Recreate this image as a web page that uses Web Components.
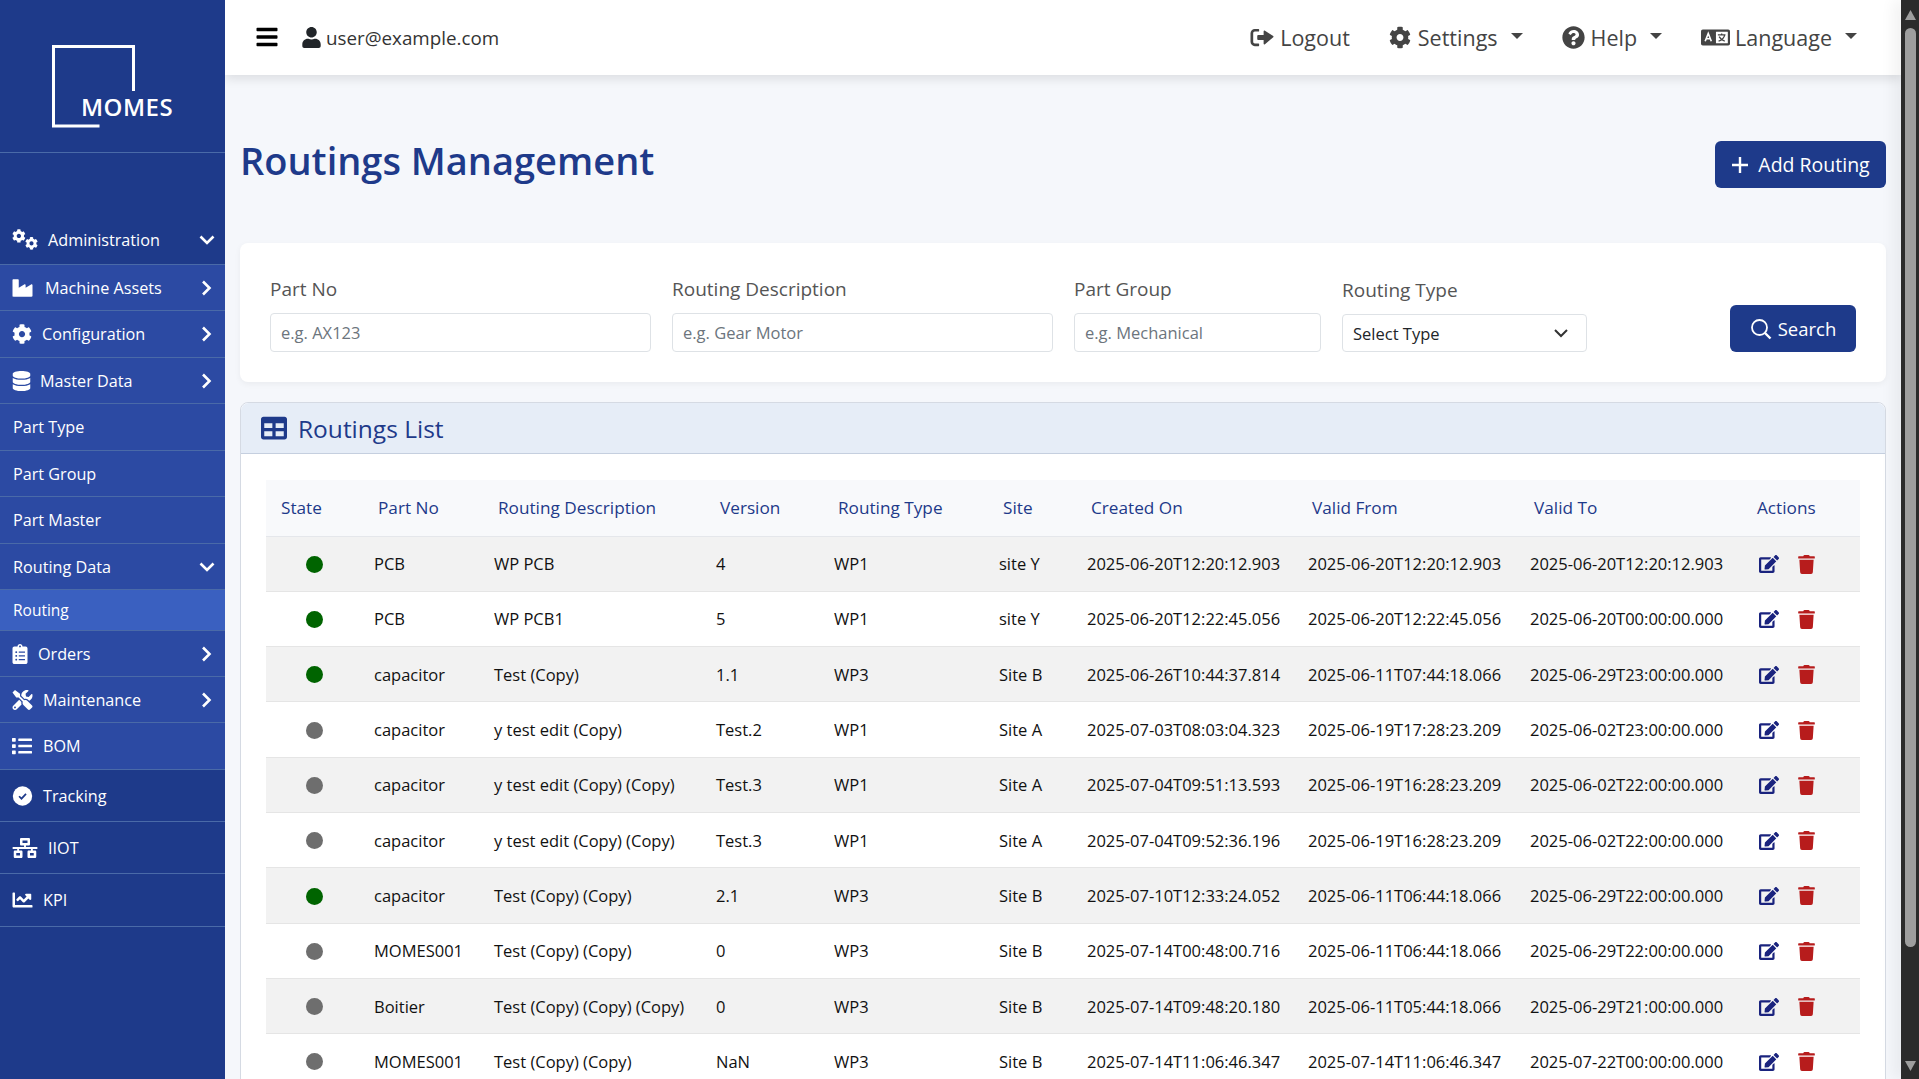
<!DOCTYPE html>
<html lang="en">
<head>
<meta charset="utf-8">
<title>Routings Management</title>
<style>
  html, body { margin: 0; height: 100%; overflow: hidden; }
  body { font-family: "Open Sans", "Liberation Sans", sans-serif; background: #f5f7fb; }
</style>
</head>
<body>
<momes-app>
  <side-bar slot="side">
    <nav-item h="46" pb="4" tone="dark" icon="cogs" iw="26" text="48" chevron="down">Administration</nav-item>
    <nav-item h="46" icon="industry" iw="21" text="45" chevron="right">Machine Assets</nav-item>
    <nav-item h="47" icon="cog" iw="20" text="42" chevron="right">Configuration</nav-item>
    <nav-item h="46" icon="database" iw="19" text="40" chevron="right">Master Data</nav-item>
    <nav-item h="47" text="13">Part Type</nav-item>
    <nav-item h="46" text="13">Part Group</nav-item>
    <nav-item h="47" text="13">Part Master</nav-item>
    <nav-item h="46" text="13" chevron="down">Routing Data</nav-item>
    <nav-item h="41" tone="active" text="13">Routing</nav-item>
    <nav-item h="46" icon="clipboard" iw="16" text="38" chevron="right">Orders</nav-item>
    <nav-item h="46" icon="tools" iw="21" text="43" chevron="right">Maintenance</nav-item>
    <nav-item h="47" icon="list" iw="20" text="43">BOM</nav-item>
    <nav-item h="52" tone="dark" icon="check" iw="21" text="43">Tracking</nav-item>
    <nav-item h="52" tone="dark" icon="network" iw="26" text="48">IIOT</nav-item>
    <nav-item h="53" tone="dark" icon="chart" iw="21" text="43">KPI</nav-item>
  </side-bar>
  <top-bar slot="top"></top-bar>
  <page-head slot="main"></page-head>
  <filter-card slot="main"></filter-card>
  <routing-list slot="main"></routing-list>
  <fake-scrollbar slot="bar"></fake-scrollbar>
</momes-app>

<script>
const ICONS = {
  bars: [448, 'M16 132h416c8.837 0 16-7.163 16-16V76c0-8.837-7.163-16-16-16H16C7.163 60 0 67.163 0 76v40c0 8.837 7.163 16 16 16zm0 160h416c8.837 0 16-7.163 16-16v-40c0-8.837-7.163-16-16-16H16c-8.837 0-16 7.163-16 16v40c0 8.837 7.163 16 16 16zm0 160h416c8.837 0 16-7.163 16-16v-40c0-8.837-7.163-16-16-16H16c-8.837 0-16 7.163-16 16v40c0 8.837 7.163 16 16 16z'],
  user: [448, 'M224 256c70.7 0 128-57.3 128-128S294.7 0 224 0 96 57.3 96 128s57.3 128 128 128zm89.6 32h-16.7c-22.2 10.2-46.9 16-72.9 16s-50.6-5.8-72.9-16h-16.7C60.2 288 0 348.2 0 422.4V464c0 26.5 21.5 48 48 48h352c26.5 0 48-21.5 48-48v-41.6c0-74.2-60.2-134.4-134.4-134.4z'],
  cog: [512, 'M487.4 315.7l-42.6-24.6c4.3-23.2 4.3-47 0-70.2l42.6-24.6c4.9-2.8 7.1-8.6 5.5-14-11.1-35.6-30-67.8-54.7-94.6-3.8-4.1-10-5.1-14.8-2.3L380.8 110c-17.9-15.4-38.5-27.3-60.8-35.1V25.8c0-5.6-3.9-10.5-9.4-11.7-36.7-8.2-74.3-7.8-109.2 0-5.5 1.2-9.4 6.1-9.4 11.7V75c-22.2 7.9-42.8 19.8-60.8 35.1L88.7 85.5c-4.9-2.8-11-1.9-14.8 2.3-24.7 26.7-43.6 58.9-54.7 94.6-1.7 5.4.6 11.2 5.5 14L67.3 221c-4.3 23.2-4.3 47 0 70.2l-42.6 24.6c-4.9 2.8-7.1 8.6-5.5 14 11.1 35.6 30 67.8 54.7 94.6 3.8 4.1 10 5.1 14.8 2.3l42.6-24.6c17.9 15.4 38.5 27.3 60.8 35.1v49.2c0 5.6 3.9 10.5 9.4 11.7 36.7 8.2 74.3 7.8 109.2 0 5.5-1.2 9.4-6.1 9.4-11.7v-49.2c22.2-7.9 42.8-19.8 60.8-35.1l42.6 24.6c4.9 2.8 11 1.9 14.8-2.3 24.7-26.7 43.6-58.9 54.7-94.6 1.5-5.5-.7-11.3-5.6-14.1zM256 336c-44.1 0-80-35.9-80-80s35.9-80 80-80 80 35.9 80 80-35.9 80-80 80z'],
  help: [512, 'M504 256c0 136.997-111.043 248-248 248S8 392.997 8 256C8 119.083 119.043 8 256 8s248 111.083 248 248zM262.655 90c-54.497 0-89.255 22.957-116.549 63.758-3.536 5.286-2.353 12.415 2.715 16.258l34.699 26.31c5.205 3.947 12.621 3.008 16.665-2.122 17.864-22.658 30.113-35.797 57.303-35.797 20.429 0 45.698 13.148 45.698 32.958 0 14.976-12.363 22.667-32.534 33.976C247.128 238.528 216 254.941 216 296v4c0 6.627 5.373 12 12 12h56c6.627 0 12-5.373 12-12v-1.333c0-28.462 83.186-29.647 83.186-106.667 0-58.002-60.165-102-116.531-102zM256 338c-25.365 0-46 20.635-46 46 0 25.364 20.635 46 46 46s46-20.636 46-46c0-25.365-20.635-46-46-46z'],
  table: [512, 'M464 32H48C21.49 32 0 53.49 0 80v352c0 26.51 21.49 48 48 48h416c26.51 0 48-21.49 48-48V80c0-26.51-21.49-48-48-48zM224 416H64v-96h160v96zm0-160H64v-96h160v96zm224 160H288v-96h160v96zm0-160H288v-96h160v96z'],
  edit: [576, 'M402.6 83.2l90.2 90.2c3.8 3.8 3.8 10 0 13.8L274.4 405.6l-92.8 10.3c-12.4 1.4-22.9-9.1-21.5-21.5l10.3-92.8L388.8 83.2c3.8-3.8 10-3.8 13.8 0zm162-22.9l-48.8-48.8c-15.2-15.2-39.9-15.2-55.2 0l-35.4 35.4c-3.8 3.8-3.8 10 0 13.8l90.2 90.2c3.8 3.8 10 3.8 13.8 0l35.4-35.4c15.2-15.3 15.2-40 0-55.2zM384 346.2V448H64V128h229.8c3.2 0 6.2-1.3 8.5-3.5l40-40c7.6-7.6 2.2-20.5-8.5-20.5H48C21.5 64 0 85.5 0 112v352c0 26.5 21.5 48 48 48h352c26.5 0 48-21.5 48-48V306.2c0-10.7-12.9-16-20.5-8.5l-40 40c-2.2 2.3-3.5 5.3-3.5 8.5z'],
  trash: [448, 'M432 32H312l-9.4-18.7A24 24 0 0 0 281.1 0H166.8a23.72 23.72 0 0 0-21.4 13.3L136 32H16A16 16 0 0 0 0 48v32a16 16 0 0 0 16 16h416a16 16 0 0 0 16-16V48a16 16 0 0 0-16-16zM53.2 467a48 48 0 0 0 47.9 45h245.8a48 48 0 0 0 47.9-45L416 128H32z'],
  industry: [512, 'M475.115 163.781L336 252.309v-68.28c0-18.916-20.931-30.399-36.885-20.248L160 252.309V56c0-13.255-10.745-24-24-24H24C10.745 32 0 42.745 0 56v400c0 13.255 10.745 24 24 24h464c13.255 0 24-10.745 24-24V184.029c0-18.917-20.931-30.399-36.885-20.248z'],
  database: [448, 'M448 73.143v45.714C448 159.143 347.667 192 224 192S0 159.143 0 118.857V73.143C0 32.857 100.333 0 224 0s224 32.857 224 73.143zM448 176v102.857C448 319.143 347.667 352 224 352S0 319.143 0 278.857V176c48.125 33.143 136.208 48.572 224 48.572S399.874 209.143 448 176zm0 160v102.857C448 479.143 347.667 512 224 512S0 479.143 0 438.857V336c48.125 33.143 136.208 48.572 224 48.572S399.874 369.143 448 336z'],
  clipboard: [384, 'M336 64h-80c0-35.3-28.7-64-64-64s-64 28.7-64 64H48C21.5 64 0 85.5 0 112v352c0 26.5 21.5 48 48 48h288c26.5 0 48-21.5 48-48V112c0-26.5-21.5-48-48-48zM96 424c-13.3 0-24-10.7-24-24s10.7-24 24-24 24 10.7 24 24-10.7 24-24 24zm0-96c-13.3 0-24-10.7-24-24s10.7-24 24-24 24 10.7 24 24-10.7 24-24 24zm0-96c-13.3 0-24-10.7-24-24s10.7-24 24-24 24 10.7 24 24-10.7 24-24 24zm96-192c13.3 0 24 10.7 24 24s-10.7 24-24 24-24-10.7-24-24 10.7-24 24-24zm128 368c0 4.4-3.6 8-8 8H168c-4.4 0-8-3.6-8-8v-16c0-4.4 3.6-8 8-8h144c4.4 0 8 3.6 8 8v16zm0-96c0 4.4-3.6 8-8 8H168c-4.4 0-8-3.6-8-8v-16c0-4.4 3.6-8 8-8h144c4.4 0 8 3.6 8 8v16zm0-96c0 4.4-3.6 8-8 8H168c-4.4 0-8-3.6-8-8v-16c0-4.4 3.6-8 8-8h144c4.4 0 8 3.6 8 8v16z'],
  tools: [512, 'M501.1 395.7L384 278.6c-23.1-23.1-57.6-27.6-85.4-13.9L192 158.1V96L64 0 0 64l96 128h62.1l106.6 106.6c-13.6 27.8-9.2 62.3 13.9 85.4l117.1 117.1c14.6 14.6 38.2 14.6 52.7 0l52.7-52.7c14.5-14.6 14.5-38.2 0-52.7zM331.7 225c28.3 0 54.9 11 74.9 31l19.4 19.4c15.8-6.9 30.8-16.5 43.8-29.5 37.1-37.1 49.7-89.3 37.9-136.7-2.2-9-13.5-12.1-20.1-5.5l-74.4 74.4-67.9-11.3L334 98.9l74.4-74.4c6.6-6.6 3.4-17.9-5.7-20.2-47.4-11.7-99.6.9-136.6 37.9-28.5 28.5-41.9 66.1-41.2 103.6l82.1 82.1c8.1-1.9 16.5-2.9 24.7-2.9zm-103.9 82l-56.7-56.7L18.7 402.8c-25 25-25 65.5 0 90.5s65.5 25 90.5 0l123.6-123.6c-7.6-19.9-9.9-41.6-5-62.7zM64 472c-13.2 0-24-10.8-24-24 0-13.3 10.7-24 24-24s24 10.7 24 24c0 13.2-10.7 24-24 24z'],
  list: [512, 'M80 368H16a16 16 0 0 0-16 16v64a16 16 0 0 0 16 16h64a16 16 0 0 0 16-16v-64a16 16 0 0 0-16-16zm0-320H16A16 16 0 0 0 0 64v64a16 16 0 0 0 16 16h64a16 16 0 0 0 16-16V64a16 16 0 0 0-16-16zm0 160H16a16 16 0 0 0-16 16v64a16 16 0 0 0 16 16h64a16 16 0 0 0 16-16v-64a16 16 0 0 0-16-16zm416 176H176a16 16 0 0 0-16 16v32a16 16 0 0 0 16 16h320a16 16 0 0 0 16-16v-32a16 16 0 0 0-16-16zm0-320H176a16 16 0 0 0-16 16v32a16 16 0 0 0 16 16h320a16 16 0 0 0 16-16V80a16 16 0 0 0-16-16zm0 160H176a16 16 0 0 0-16 16v32a16 16 0 0 0 16 16h320a16 16 0 0 0 16-16v-32a16 16 0 0 0-16-16z'],
  network: [640, 'M640 264v-16c0-8.84-7.16-16-16-16H344v-40h72c17.67 0 32-14.33 32-32V32c0-17.67-14.33-32-32-32H224c-17.67 0-32 14.33-32 32v128c0 17.67 14.33 32 32 32h72v40H16c-8.84 0-16 7.16-16 16v16c0 8.84 7.16 16 16 16h104v40H64c-17.67 0-32 14.33-32 32v128c0 17.67 14.33 32 32 32h160c17.67 0 32-14.33 32-32V352c0-17.67-14.33-32-32-32h-56v-40h304v40h-56c-17.67 0-32 14.33-32 32v128c0 17.67 14.33 32 32 32h160c17.67 0 32-14.33 32-32V352c0-17.67-14.33-32-32-32h-56v-40h104c8.84 0 16-7.16 16-16zM256 128V64h128v64H256zm-64 320H96v-64h96v64zm352 0h-96v-64h96v64z'],
  chart: [512, 'M496 384H64V80c0-8.84-7.16-16-16-16H16C7.16 64 0 71.16 0 80v336c0 17.67 14.33 32 32 32h464c8.84 0 16-7.16 16-16v-32c0-8.84-7.16-16-16-16zM464 96H345.94c-21.38 0-32.09 25.85-16.97 40.97l32.4 32.4L288 242.75l-73.37-73.37c-12.5-12.5-32.76-12.5-45.25 0l-68.69 68.69c-6.25 6.25-6.25 16.38 0 22.63l22.62 22.62c6.25 6.25 16.38 6.25 22.63 0L192 237.25l73.37 73.37c12.5 12.5 32.76 12.5 45.25 0l96-96 32.4 32.4c15.12 15.12 40.97 4.41 40.97-16.97V112c.01-8.84-7.15-16-15.99-16z'],
};

// icons that need more than one plain path, or a tighter crop
const CUSTOM_ICONS = {
  cogs: `<svg viewBox="0 0 640 512" fill="currentColor"><path transform="scale(.66)" d="${ICONS.cog[1]}"/><path transform="translate(320 192) scale(.625)" d="${ICONS.cog[1]}"/></svg>`,
  check: `<svg viewBox="0 0 512 512"><circle cx="256" cy="256" r="248" fill="currentColor"/><path d="M168 262l62 62 116-122" fill="none" stroke="#1e3a8a" stroke-width="44"/></svg>`,
  logout: `<svg viewBox="0 0 512 512" fill="currentColor"><path d="M180 448H96c-53 0-96-43-96-96V160c0-53 43-96 96-96h84c6.6 0 12 5.4 12 12v36c0 6.6-5.4 12-12 12H96c-19.9 0-36 16.1-36 36v192c0 19.900 16.100 36 36 36h84c6.600 0 12 5.400 12 12v36c0 6.600-5.400 12-12 12z"/><path d="M292 116v84H170c-11 0-20 9-20 20v72c0 11 9 20 20 20h122v84c0 16 19 24 30 13l184-159c8-7 8-19 0-26L322 103c-11-11-30-3-30 13z"/></svg>`,
  language: `<svg viewBox="0 70 640 372"><path fill="currentColor" d="M40 80h560a40 40 0 0 1 40 40v272a40 40 0 0 1-40 40H40a40 40 0 0 1-40-40V120a40 40 0 0 1 40-40z"/><rect x="330" y="128" width="262" height="256" rx="6" fill="#fff"/><path d="M92 340l68-172 68 172M118 284h84" fill="none" stroke="#fff" stroke-width="36"/><path d="M372 196h168M456 170v30M524 196c-16 70-72 118-136 140M400 236c26 50 70 84 124 100" fill="none" stroke="currentColor" stroke-width="28"/></svg>`,
};

class FaIcon extends HTMLElement {
  connectedCallback() {
    const name = this.getAttribute('name');
    const w = this.getAttribute('w') || 16;
    const h = this.getAttribute('h') || w;
    let svg = CUSTOM_ICONS[name];
    if (!svg) {
      const [vw, d] = ICONS[name];
      svg = `<svg viewBox="0 0 ${vw} 512" fill="currentColor"><path d="${d}"/></svg>`;
    }
    this.attachShadow({mode: 'open'}).innerHTML = `
      <style>
        :host { display: inline-flex; flex: none; width: ${w}px; height: ${h}px; }
        svg { width: 100%; height: 100%; display: block; }
      </style>${svg}`;
  }
}

class MomesApp extends HTMLElement {
  constructor() {
    super();
    this.attachShadow({mode: 'open'}).innerHTML = `
      <style>
        :host { display: flex; height: 100vh; overflow: hidden; background: #f5f7fb; }
        .center { flex: 1; min-width: 0; display: flex; flex-direction: column; overflow: hidden; }
        .content { padding: 66px 15px 0 15px; flex: 1; min-height: 0; }
      </style>
      <slot name="side"></slot>
      <div class="center">
        <slot name="top"></slot>
        <div class="content"><slot name="main"></slot></div>
      </div>
      <slot name="bar"></slot>`;
  }
}

class SideBar extends HTMLElement {
  constructor() {
    super();
    this.attachShadow({mode: 'open'}).innerHTML = `
      <style>
        :host { display: block; flex: none; width: 225px; background: #1e3a8a; position: relative; z-index: 2; }
        .logo { height: 152px; border-bottom: 1px solid #4a6aa8; display: flex; }
        .mark { position: relative; width: 225px; height: 152px; }
        svg { position: absolute; left: 0; top: 0; }
        .name { position: absolute; left: 81px; top: 90px; color: #fff; font: 600 24px/34px "Open Sans", sans-serif; letter-spacing: .5px; }
        nav { padding-top: 66px; }
      </style>
      <div class="logo">
        <div class="mark">
          <svg width="225" height="152" fill="none" stroke="#fff" stroke-width="3"><path d="M133.500 91V46.500H53.500V126H99.500"/></svg>
          <span class="name">MOMES</span>
        </div>
      </div>
      <nav><slot></slot></nav>`;
  }
}

class NavItem extends HTMLElement {
  connectedCallback() {
    const tone = this.getAttribute('tone');
    const bg = tone === 'dark' ? '#1e3a8a' : tone === 'active' ? '#3a60c0' : '#2c4aa3';
    const icon = this.getAttribute('icon');
    const iw = this.getAttribute('iw') || 20;
    const ih = icon === 'cogs' ? 21 : 20;
    const chev = this.getAttribute('chevron');
    const chevron = chev === 'down' ?
        '<svg class="chev" viewBox="0 0 16 12" width="16" height="12"><path d="M1.500 2.500L8 9l6.500-6.500" fill="none" stroke="#fff" stroke-width="2.600"/></svg>' :
        chev === 'right' ?
        '<svg class="chev" viewBox="0 0 16 16" width="16" height="16"><path d="M4 1.500L10.500 8 4 14.500" fill="none" stroke="#fff" stroke-width="2.600"/></svg>' :
        '';
    this.attachShadow({mode: 'open'}).innerHTML = `
      <style>
        :host {
          display: flex; align-items: center; position: relative; box-sizing: border-box;
          height: ${this.getAttribute('h')}px; background: ${bg};
          border-bottom: 1px solid #4a6aa8; color: #fff;
          padding: 0 10px ${this.getAttribute('pb') || 0}px 12px;
          font-size: ${tone === 'active' ? 15.5 : 16.2}px; line-height: 20px;
        }
        .label { position: absolute; left: ${this.getAttribute('text')}px; }
        .chev { margin-left: auto; }
      </style>
      ${icon ? `<fa-icon name="${icon}" w="${iw}" h="${ih}"></fa-icon>` : ''}
      <span class="label"><slot></slot></span>
      ${chevron}`;
  }
}

class NavLink extends HTMLElement {
  connectedCallback() {
    const gap = this.getAttribute('gap') || 6;
    const menu = this.hasAttribute('menu');
    this.attachShadow({mode: 'open'}).innerHTML = `
      <style>
        :host { display: inline-flex; align-items: center; color: #444; font-size: 21.500px; line-height: 28px; }
        fa-icon { margin-right: ${gap}px; }
        .caret { margin-left: 13px; width: 0; height: 0; border-left: 6px solid transparent; border-right: 6px solid transparent; border-top: 6px solid #444; margin-top: -3px; }
      </style>
      <fa-icon name="${this.getAttribute('icon')}" w="${this.getAttribute('iw')}" h="${this.getAttribute('ih') || 23}"></fa-icon>
      <span><slot></slot></span>
      ${menu ? '<span class="caret"></span>' : ''}`;
  }
}

class TopBar extends HTMLElement {
  constructor() {
    super();
    this.attachShadow({mode: 'open'}).innerHTML = `
      <style>
        :host { display: flex; align-items: center; flex: none; height: 75px; background: #fff; box-shadow: 0 4px 10px rgba(0,0,0,.1); position: relative; z-index: 1; padding: 0 44px 0 31px; }
        .burger { color: #000; display: flex; margin-right: 24px; margin-top: -2px; }
        .who { display: flex; align-items: center; color: #333; font-size: 18.800px; line-height: 26px; }
        .who fa-icon { color: #212529; margin-right: 5px; }
        .links { margin-left: auto; display: flex; align-items: center; gap: 39px; }
      </style>
      <span class="burger"><fa-icon name="bars" w="22" h="24"></fa-icon></span>
      <span class="who"><fa-icon name="user" w="19" h="21"></fa-icon><span>user@example.com</span></span>
      <div class="links">
        <nav-link icon="logout" iw="24" gap="6">Logout</nav-link>
        <nav-link icon="cog" iw="22" gap="7" menu>Settings</nav-link>
        <nav-link icon="help" iw="23" gap="6" menu>Help</nav-link>
        <nav-link icon="language" iw="29" ih="17" gap="5" menu>Language</nav-link>
      </div>`;
  }
}

class PageHead extends HTMLElement {
  constructor() {
    super();
    this.attachShadow({mode: 'open'}).innerHTML = `
      <style>
        :host { display: flex; justify-content: space-between; align-items: center; height: 47px; margin-bottom: 55px; }
        h1 { margin: -8px 0 0 0; color: #1e3a8a; font-size: 38px; font-weight: 600; line-height: 47px; }
        button { display: flex; align-items: center; gap: 9px; height: 47px; width: 171px; justify-content: center; background: #1e3a8a; color: #fff; border: 0; border-radius: 6px; font: 400 19.500px "Open Sans", sans-serif; padding: 0; }
        svg { width: 18px; height: 18px; }
      </style>
      <h1>Routings Management</h1>
      <button><svg viewBox="0 0 18 18"><path d="M9 1v16M1 9h16" stroke="#fff" stroke-width="2.400"/></svg>Add Routing</button>`;
  }
}

class FilterField extends HTMLElement {
  connectedCallback() {
    const select = this.hasAttribute('select');
    const ctl = select ?
        `<div class="ctl sel"><span>Select Type</span><svg viewBox="0 0 16 16" width="16" height="16"><path d="M2 5l6 6 6-6" fill="none" stroke="#333" stroke-width="2"/></svg></div>` :
        `<input class="ctl" placeholder="${this.getAttribute('hint')}">`;
    this.attachShadow({mode: 'open'}).innerHTML = `
      <style>
        :host { display: block; }
        label { display: block; color: #555; font-size: 19px; line-height: 24px; font-weight: 500; margin-bottom: 12px; margin-top: ${select ? 1 : 0}px; }
        .ctl { box-sizing: border-box; width: 100%; height: ${select ? 38 : 39}px; border: 1px solid #dee2e6; border-radius: 4px; background: #fff; padding: 0 10px; font: 16.500px "Open Sans", sans-serif; color: #212529; outline: 0; display: block; }
        input::placeholder { color: #6c757d; opacity: 1; }
        .sel { display: flex; align-items: center; justify-content: space-between; padding-right: 17px; }
      </style>
      <label><slot></slot></label>
      ${ctl}`;
  }
}

class FilterCard extends HTMLElement {
  constructor() {
    super();
    this.attachShadow({mode: 'open'}).innerHTML = `
      <style>
        :host { display: grid; grid-template-columns: 381px 381px 247px 245px 1fr; column-gap: 21px; align-items: end; box-sizing: border-box; height: 139px; padding: 34px 30px 30px 30px; margin-bottom: 20px; background: #fff; border-radius: 8px; box-shadow: 0 2px 6px rgba(0,0,0,.05); }
        button { justify-self: end; display: flex; align-items: center; justify-content: center; gap: 6px; width: 126px; height: 47px; background: #1e3a8a; color: #fff; border: 0; border-radius: 6px; font: 400 18.500px "Open Sans", sans-serif; padding: 0; }
      </style>
      <filter-field hint="e.g. AX123">Part No</filter-field>
      <filter-field hint="e.g. Gear Motor">Routing Description</filter-field>
      <filter-field hint="e.g. Mechanical">Part Group</filter-field>
      <filter-field select>Routing Type</filter-field>
      <button><svg viewBox="0 0 22 22" width="22" height="22"><circle cx="9.500" cy="9.500" r="7.500" fill="none" stroke="#fff" stroke-width="1.800"/><path d="M15 15l5.500 5.500" stroke="#fff" stroke-width="2.400"/></svg>Search</button>`;
  }
}

const ROWS = [
  ['g', 'PCB', 'WP PCB', '4', 'WP1', 'site Y', '2025-06-20T12:20:12.903', '2025-06-20T12:20:12.903', '2025-06-20T12:20:12.903'],
  ['g', 'PCB', 'WP PCB1', '5', 'WP1', 'site Y', '2025-06-20T12:22:45.056', '2025-06-20T12:22:45.056', '2025-06-20T00:00:00.000'],
  ['g', 'capacitor', 'Test (Copy)', '1.1', 'WP3', 'Site B', '2025-06-26T10:44:37.814', '2025-06-11T07:44:18.066', '2025-06-29T23:00:00.000'],
  ['x', 'capacitor', 'y test edit (Copy)', 'Test.2', 'WP1', 'Site A', '2025-07-03T08:03:04.323', '2025-06-19T17:28:23.209', '2025-06-02T23:00:00.000'],
  ['x', 'capacitor', 'y test edit (Copy) (Copy)', 'Test.3', 'WP1', 'Site A', '2025-07-04T09:51:13.593', '2025-06-19T16:28:23.209', '2025-06-02T22:00:00.000'],
  ['x', 'capacitor', 'y test edit (Copy) (Copy)', 'Test.3', 'WP1', 'Site A', '2025-07-04T09:52:36.196', '2025-06-19T16:28:23.209', '2025-06-02T22:00:00.000'],
  ['g', 'capacitor', 'Test (Copy) (Copy)', '2.1', 'WP3', 'Site B', '2025-07-10T12:33:24.052', '2025-06-11T06:44:18.066', '2025-06-29T22:00:00.000'],
  ['x', 'MOMES001', 'Test (Copy) (Copy)', '0', 'WP3', 'Site B', '2025-07-14T00:48:00.716', '2025-06-11T06:44:18.066', '2025-06-29T22:00:00.000'],
  ['x', 'Boitier', 'Test (Copy) (Copy) (Copy)', '0', 'WP3', 'Site B', '2025-07-14T09:48:20.180', '2025-06-11T05:44:18.066', '2025-06-29T21:00:00.000'],
  ['x', 'MOMES001', 'Test (Copy) (Copy)', 'NaN', 'WP3', 'Site B', '2025-07-14T11:06:46.347', '2025-07-14T11:06:46.347', '2025-07-22T00:00:00.000'],
];
const HEADS = ['State', 'Part No', 'Routing Description', 'Version', 'Routing Type', 'Site', 'Created On', 'Valid From', 'Valid To', 'Actions'];
const WIDTHS = [96, 120, 222, 118, 165, 88, 221, 222, 229, 113];

class RoutingList extends HTMLElement {
  constructor() {
    super();
    this.attachShadow({mode: 'open'});
  }

  connectedCallback() {
    this.render();
  }

  render() {
    this.shadowRoot.innerHTML = `
      <style>
        :host { display: block; background: #fff; border: 1px solid #d5dae3; border-radius: 8px 8px 0 0; box-sizing: border-box; }
        .head { display: flex; align-items: center; gap: 11px; height: 50px; padding-left: 20px; background: #e6edf7; border-bottom: 1px solid #c5cfdf; border-radius: 8px 8px 0 0; color: #1e3a8a; font-size: 24.500px; font-weight: 500; }
        .body { padding: 26px 24px 0 25px; }
        table { border-collapse: collapse; table-layout: fixed; width: 1594px; font-size: 16.500px; color: #111; }
        thead tr { background: #f8f9fb; height: 56px; }
        th { text-align: left; font-size: 17.200px; font-weight: 500; color: #1e3a8a; padding: 0 0 0 16px; border-bottom: 1px solid #e5e7eb; white-space: nowrap; }
        th:first-child { padding-left: 15px; }
        th:last-child { padding-left: 10px; }
        td { box-sizing: border-box; padding: 0 0 0 12px; height: 55.300px; border-bottom: 1px solid #e5e5e5; white-space: nowrap; }
        tbody tr:nth-child(odd) { background: #f2f2f2; }
        td.state { padding: 0 0 3px 0; text-align: center; }
        .dot { display: inline-block; width: 17px; height: 17px; border-radius: 50%; vertical-align: middle; }
        .g { background: #006400; }
        .x { background: #6e6e6e; }
        .acts { display: flex; align-items: center; gap: 19px; padding-top: 1px; }
        .ed { color: #1a237e; }
        .tr { color: #b71c1c; }
      </style>
      <div class="head"><fa-icon name="table" w="26" h="26"></fa-icon><span>Routings List</span></div>
      <div class="body">
        <table>
          <colgroup>${WIDTHS.map(w => `<col style="width:${w}px">`).join('')}</colgroup>
          <thead><tr>${HEADS.map(h => `<th>${h}</th>`).join('')}</tr></thead>
          <tbody>
            ${ROWS.map(r => `
              <tr>
                <td class="state"><span class="dot ${r[0]}"></span></td>
                ${r.slice(1).map(c => `<td>${c}</td>`).join('')}
                <td><div class="acts"><fa-icon class="ed" name="edit" w="20" h="18"></fa-icon><fa-icon class="tr" name="trash" w="17" h="19"></fa-icon></div></td>
              </tr>`).join('')}
          </tbody>
        </table>
      </div>`;
  }
}

class FakeScrollbar extends HTMLElement {
  constructor() {
    super();
    this.attachShadow({mode: 'open'}).innerHTML = `
      <style>
        :host { display: flex; flex-direction: column; flex: none; width: 18px; height: 100vh; box-sizing: border-box; padding: 10px 3px 8px 4px; background: #2b2b2b; box-shadow: -8px 0 14px rgba(0,0,0,.05); position: relative; z-index: 3; }
        .thumb { width: 11px; height: 919px; margin-top: 8px; background: #9e9e9e; border-radius: 6px; }
        svg { display: block; }
        .down { margin-top: auto; }
      </style>
      <svg width="11" height="10" viewBox="0 0 11 10"><path d="M5.500 0L11 10H0z" fill="#9e9e9e"/></svg>
      <div class="thumb"></div>
      <svg class="down" width="11" height="10" viewBox="0 0 11 10"><path d="M5.500 10L11 0H0z" fill="#9e9e9e"/></svg>`;
  }
}

customElements.define('fa-icon', FaIcon);
customElements.define('momes-app', MomesApp);
customElements.define('side-bar', SideBar);
customElements.define('nav-item', NavItem);
customElements.define('nav-link', NavLink);
customElements.define('top-bar', TopBar);
customElements.define('page-head', PageHead);
customElements.define('filter-field', FilterField);
customElements.define('filter-card', FilterCard);
customElements.define('routing-list', RoutingList);
customElements.define('fake-scrollbar', FakeScrollbar);
</script>
</body>
</html>
